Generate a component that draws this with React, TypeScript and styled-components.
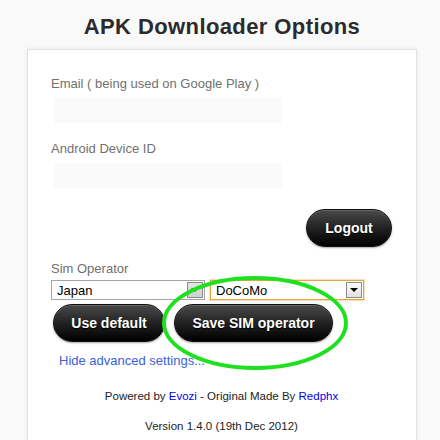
import React from "react";
import styled, { createGlobalStyle } from "styled-components";

const GlobalStyle = createGlobalStyle`
  html, body { margin: 0; padding: 0; background: #f9f9f9; }
  body { font-family: "Liberation Sans", Arial, sans-serif; }
`;

const Page = styled.div`
  padding: 14px 23px 0 27px;
  height: 440px;
  box-sizing: border-box;
  overflow: hidden;
`;

const Title = styled.h1`
  margin: 0 0 9px;
  font-family: "Liberation Sans", Arial, sans-serif;
  font-size: 22px;
  line-height: 26px;
  font-weight: bold;
  color: #2b2b2b;
  text-align: center;
  letter-spacing: 0.4px;
`;

const Card = styled.div`
  background: #fff;
  border: 1px solid #e2e2e2;
  box-shadow: 0 0 4px rgba(0, 0, 0, 0.08);
  padding: 26px 24px 40px 23px;
  min-height: 420px;
  box-sizing: border-box;
`;

const FieldLabel = styled.div<{ $top?: number }>`
  margin-top: ${(p) => p.$top ?? 0}px;
  font-size: 13px;
  line-height: 15px;
  color: #707070;
`;

const TextInput = styled.input`
  display: block;
  box-sizing: border-box;
  width: 228px;
  height: 25px;
  margin: 7px 0 0 3px;
  border: none;
  background: #fafafa;
  outline: none;
`;

const LogoutRow = styled.div`
  display: flex;
  justify-content: flex-end;
  margin-top: 21px;
`;

const PillButton = styled.button<{ $w: number }>`
  box-sizing: border-box;
  width: ${(p) => p.$w}px;
  height: 38px;
  padding: 0;
  border: 1px solid #111;
  border-radius: 19px;
  background: linear-gradient(#4a4a4a, #222 50%, #000);
  box-shadow: 0 1px 2px rgba(0, 0, 0, 0.35), inset 0 1px 0 rgba(255, 255, 255, 0.15);
  color: #fff;
  font-family: "Liberation Sans", Arial, sans-serif;
  font-size: 14px;
  font-weight: bold;
  text-shadow: 0 1px 1px #000;
  cursor: pointer;
`;

const SelectRow = styled.div`
  display: flex;
  gap: 5px;
  margin-top: 4px;
`;

const FakeSelect = styled.div<{ $focused?: boolean }>`
  box-sizing: border-box;
  width: 154px;
  height: 20px;
  display: flex;
  align-items: center;
  justify-content: space-between;
  padding: 0 1px 0 5px;
  border: 1px solid ${(p) => (p.$focused ? "#e5a53c" : "#a5a5a5")};
  box-shadow: ${(p) => (p.$focused ? "0 0 0 1px rgba(229,165,60,0.35)" : "none")};
  background: #fff;
  font-family: "Liberation Sans", Arial, sans-serif;
  font-size: 13px;
  color: #000;
`;

const ArrowBox = styled.span<{ $muted?: boolean }>`
  box-sizing: border-box;
  width: 16px;
  height: 16px;
  display: flex;
  align-items: center;
  justify-content: center;
  border: 1px solid #8c8c8c;
  background: ${(p) => (p.$muted ? "linear-gradient(#e4e4e4, #cfcfcf)" : "linear-gradient(#fafafa, #e2e2e2)")};
`;

const ArrowGlyph = styled.span<{ $muted?: boolean }>`
  width: 0;
  height: 0;
  border-left: 4px solid transparent;
  border-right: 4px solid transparent;
  border-top: 4px solid ${(p) => (p.$muted ? "#444" : "#000")};
`;

const ButtonRow = styled.div`
  position: relative;
  display: flex;
  gap: 9px;
  margin: 4px 0 0 2px;
`;

const Highlight = styled.svg`
  position: absolute;
  left: 109px;
  top: -28px;
  width: 186px;
  height: 94px;
  pointer-events: none;
  overflow: visible;
`;

const AdvancedLink = styled.a`
  display: block;
  margin: 11px 0 0 8px;
  font-size: 13px;
  line-height: 15px;
  color: #3a62d8;
  text-decoration: none;
`;

const Footer = styled.div<{ $top: number }>`
  margin-top: ${(p) => p.$top}px;
  text-align: center;
  font-size: 11.5px;
  line-height: 13px;
  color: #222;
`;

const FooterLink = styled.a`
  color: #0000ee;
  text-decoration: none;
`;

export default function App() {
  return (
    <>
      <GlobalStyle />
      <Page>
        <Title>APK Downloader Options</Title>
        <Card>
          <FieldLabel>Email ( being used on Google Play )</FieldLabel>
          <TextInput type="text" />
          <FieldLabel $top={18}>Android Device ID</FieldLabel>
          <TextInput type="text" />
          <LogoutRow>
            <PillButton $w={86}>Logout</PillButton>
          </LogoutRow>
          <FieldLabel $top={14}>Sim Operator</FieldLabel>
          <SelectRow>
            <FakeSelect>
              Japan
              <ArrowBox $muted>
                <ArrowGlyph $muted />
              </ArrowBox>
            </FakeSelect>
            <FakeSelect $focused>
              DoCoMo
              <ArrowBox>
                <ArrowGlyph />
              </ArrowBox>
            </FakeSelect>
          </SelectRow>
          <ButtonRow>
            <PillButton $w={112}>Use default</PillButton>
            <PillButton $w={159}>Save SIM operator</PillButton>
            <Highlight viewBox="0 0 186 94">
              <ellipse cx="93" cy="47" rx="91" ry="45" fill="none" stroke="#1fe01f" strokeWidth="4" />
            </Highlight>
          </ButtonRow>
          <AdvancedLink href="#">Hide advanced settings...</AdvancedLink>
          <Footer $top={22}>
            Powered by <FooterLink href="#">Evozi</FooterLink> - Original Made By{" "}
            <FooterLink href="#">Redphx</FooterLink>
          </Footer>
          <Footer $top={17}>Version 1.4.0 (19th Dec 2012)</Footer>
        </Card>
      </Page>
    </>
  );
}
